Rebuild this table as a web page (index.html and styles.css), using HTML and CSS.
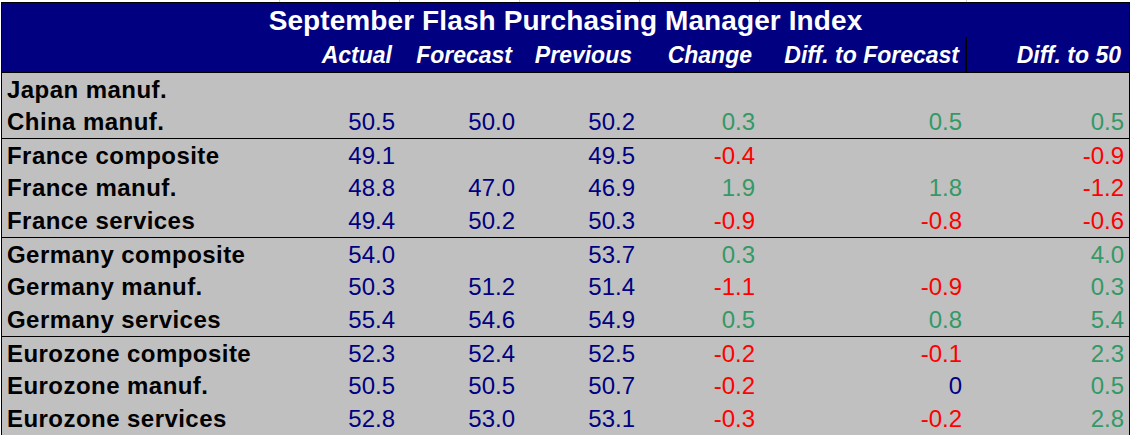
FILE: index.html
```html
<!DOCTYPE html>
<html>
<head>
<meta charset="utf-8">
<link rel="stylesheet" href="styles.css">
</head>
<body>
<div class="page">
  <div class="grid strip"><span></span><span></span><span></span><span></span><span></span><span></span><span></span></div>
  <div class="sheet">
    <div class="head">
      <div class="title">September Flash Purchasing Manager Index</div>
      <div class="grid sub">
        <span></span>
        <span>Actual</span>
        <span>Forecast</span>
        <span>Previous</span>
        <span>Change</span>
        <span class="divider">Diff. to Forecast</span>
        <span>Diff. to 50</span>
      </div>
    </div>
    <div class="grid row first"><span class="lab">Japan manuf.</span><span></span><span></span><span></span><span></span><span></span><span></span></div>
    <div class="grid row"><span class="lab">China manuf.</span><span>50.5</span><span>50.0</span><span>50.2</span><span class="g">0.3</span><span class="g">0.5</span><span class="g">0.5</span></div>
    <div class="grid row sep"><span class="lab">France composite</span><span>49.1</span><span></span><span>49.5</span><span class="r">-0.4</span><span></span><span class="r">-0.9</span></div>
    <div class="grid row"><span class="lab">France manuf.</span><span>48.8</span><span>47.0</span><span>46.9</span><span class="g">1.9</span><span class="g">1.8</span><span class="r">-1.2</span></div>
    <div class="grid row"><span class="lab">France services</span><span>49.4</span><span>50.2</span><span>50.3</span><span class="r">-0.9</span><span class="r">-0.8</span><span class="r">-0.6</span></div>
    <div class="grid row sep"><span class="lab">Germany composite</span><span>54.0</span><span></span><span>53.7</span><span class="g">0.3</span><span></span><span class="g">4.0</span></div>
    <div class="grid row"><span class="lab">Germany manuf.</span><span>50.3</span><span>51.2</span><span>51.4</span><span class="r">-1.1</span><span class="r">-0.9</span><span class="g">0.3</span></div>
    <div class="grid row"><span class="lab">Germany services</span><span>55.4</span><span>54.6</span><span>54.9</span><span class="g">0.5</span><span class="g">0.8</span><span class="g">5.4</span></div>
    <div class="grid row sep"><span class="lab">Eurozone composite</span><span>52.3</span><span>52.4</span><span>52.5</span><span class="r">-0.2</span><span class="r">-0.1</span><span class="g">2.3</span></div>
    <div class="grid row"><span class="lab">Eurozone manuf.</span><span>50.5</span><span>50.5</span><span>50.7</span><span class="r">-0.2</span><span>0</span><span class="g">0.5</span></div>
    <div class="grid row"><span class="lab">Eurozone services</span><span>52.8</span><span>53.0</span><span>53.1</span><span class="r">-0.3</span><span class="r">-0.2</span><span class="g">2.8</span></div>
  </div>
</div>
</body>
</html>
```

FILE: styles.css
```css
html, body {
  margin: 0;
  padding: 0;
  background: #ffffff;
}
body {
  font-family: "Liberation Sans", Arial, sans-serif;
  overflow: hidden;
}
.page {
  width: 1133px;
  height: 436px;
  overflow: hidden;
}
.grid {
  display: grid;
  grid-template-columns: 278px 120px 120px 120px 120px 207px 162px;
}
.strip {
  height: 2px;
  margin-left: 2px;
}
.strip span {
  border-right: 1px solid #d4d4d4;
}
.strip span:last-child {
  border-right: none;
}
.sheet {
  margin-left: 1px;
  width: 1127px;
  border-top: 1px solid #000;
  border-left: 1px solid #000;
  border-right: 1px solid #000;
  background: #c0c0c0;
}
.head {
  background: #000080;
  color: #ffffff;
  border-bottom: 1px solid #000;
}
.title {
  height: 34px;
  display: flex;
  align-items: center;
  justify-content: center;
  font-weight: bold;
  font-size: 28px;
  letter-spacing: 0.1px;
  padding-top: 2px;
  box-sizing: border-box;
}
.sub {
  height: 35px;
  font-weight: bold;
  font-style: italic;
  font-size: 23px;
}
.sub span {
  display: flex;
  align-items: center;
  justify-content: flex-end;
  padding-right: 8px;
  padding-top: 1px;
  box-sizing: border-box;
}
.sub span.divider {
  border-right: 2px solid #000;
  padding-right: 6px;
}
.row {
  height: 33px;
  box-sizing: border-box;
  font-size: 24px;
  color: #000080;
}
.row.first {
  height: 32px;
}
.row.sep {
  border-top: 1px solid #000;
}
.row span {
  display: flex;
  align-items: center;
  justify-content: flex-end;
  padding-right: 5px;
  padding-top: 1px;
}
.row span.lab {
  justify-content: flex-start;
  padding-left: 5px;
  padding-right: 0;
  font-weight: bold;
  color: #000;
  letter-spacing: 0.45px;
}
.row span.g {
  color: #339966;
}
.row span.r {
  color: #ff0000;
}
```
